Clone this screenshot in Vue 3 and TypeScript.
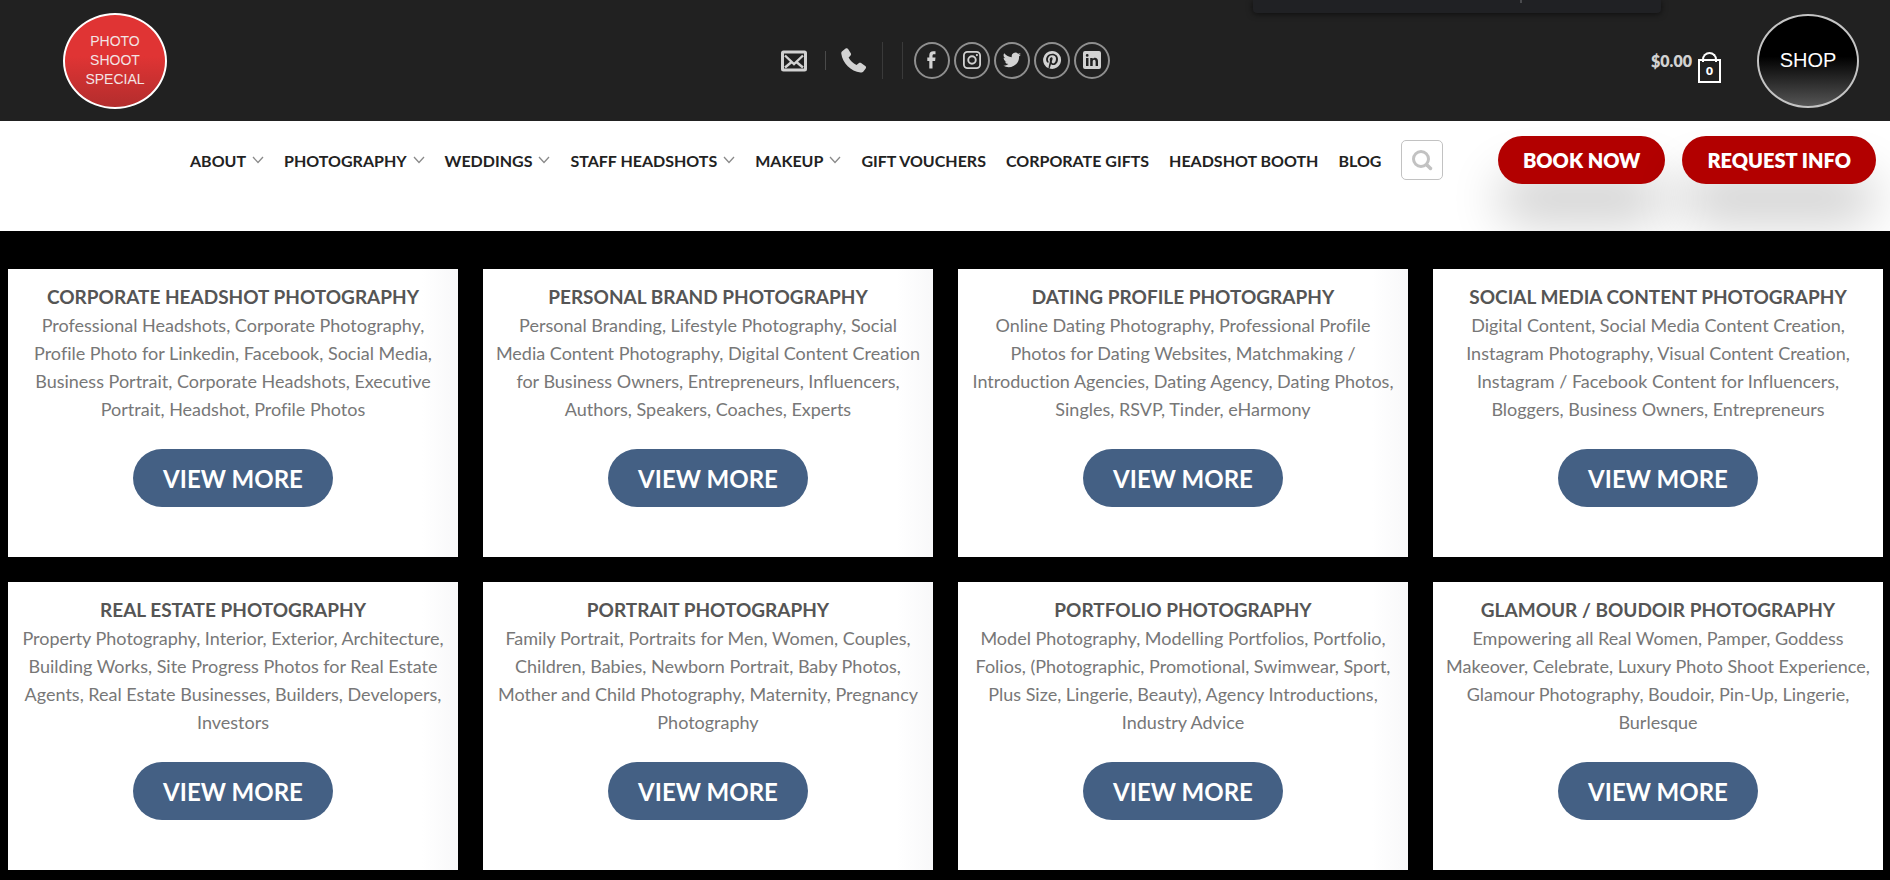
<script setup lang="ts">
interface MenuItem { label: string; menu?: boolean }
interface Social { name: string; path: string }
interface Service { title: string; text: string }

const menu: MenuItem[] = [
  { label: 'ABOUT', menu: true },
  { label: 'PHOTOGRAPHY', menu: true },
  { label: 'WEDDINGS', menu: true },
  { label: 'STAFF HEADSHOTS', menu: true },
  { label: 'MAKEUP', menu: true },
  { label: 'GIFT VOUCHERS' },
  { label: 'CORPORATE GIFTS' },
  { label: 'HEADSHOT BOOTH' },
  { label: 'BLOG' },
]

const socials: Social[] = [
  { name: 'Facebook', path: 'M8.300 19.500v-7.400H6.300v-3.700h2V6.200C8.300 3.500 9.800 2.200 12.200 2.200c1.100 0 2 .1 2.300.15v3h-1.500c-1.200 0-1.500.6-1.500 1.500v1.550h3l-.4 3.700h-2.600v7.400z' },
  { name: 'Instagram', path: 'M6.500 2h9A4.500 4.500 0 0 1 20 6.500v9a4.500 4.500 0 0 1-4.500 4.500h-9A4.500 4.500 0 0 1 2 15.500v-9A4.500 4.500 0 0 1 6.500 2zM6.500 3.800A2.700 2.700 0 0 0 3.800 6.500v9a2.700 2.700 0 0 0 2.700 2.700h9a2.700 2.700 0 0 0 2.700-2.700v-9a2.700 2.700 0 0 0-2.700-2.700zM11 6.300a4.700 4.700 0 1 1 0 9.400a4.700 4.700 0 0 1 0-9.400zM11 8.200a2.800 2.800 0 1 0 0 5.600a2.800 2.800 0 0 0 0-5.600zM15.900 5a1.100 1.100 0 1 1 0 2.200a1.100 1.100 0 0 1 0-2.200z' },
  { name: 'Twitter', path: 'M20 5.400a7.400 7.400 0 0 1-2.100.6a3.700 3.700 0 0 0 1.600-2.100a7.400 7.400 0 0 1-2.400.9a3.700 3.700 0 0 0-6.300 3.400A10.500 10.500 0 0 1 3.200 4.300a3.700 3.700 0 0 0 1.100 4.900a3.700 3.700 0 0 1-1.700-.5a3.700 3.700 0 0 0 3 3.700a3.700 3.700 0 0 1-1.700.1a3.700 3.700 0 0 0 3.500 2.600A7.400 7.400 0 0 1 2 16.600a10.500 10.500 0 0 0 16.100-9.300A7.500 7.500 0 0 0 20 5.400z' },
  { name: 'Pinterest', path: 'M11 2a9 9 0 0 0-3.400 17.300c0-.7 0-1.600.2-2.400l1.200-4.900s-.3-.6-.3-1.400c0-1.300.8-2.300 1.700-2.300c.8 0 1.200.6 1.200 1.300c0 .8-.5 2-.8 3.100c-.2.900.5 1.700 1.400 1.700c1.700 0 2.800-2.100 2.800-4.700c0-1.900-1.300-3.400-3.700-3.400c-2.700 0-4.400 2-4.400 4.300c0 .8.200 1.300.6 1.800c.2.200.2.300.1.500l-.2.700c-.1.200-.2.300-.5.200c-1.200-.5-1.800-1.900-1.800-3.400c0-2.500 2.100-5.600 6.300-5.600c3.400 0 5.600 2.500 5.600 5.100c0 3.500-1.900 6.100-4.800 6.100c-1 0-1.900-.5-2.200-1.100l-.6 2.400c-.2.800-.6 1.600-1 2.300A9 9 0 1 0 11 2z' },
  { name: 'LinkedIn', path: 'M4 2h14a2 2 0 0 1 2 2v14a2 2 0 0 1-2 2H4a2 2 0 0 1-2-2V4a2 2 0 0 1 2-2zM5 9v8h2.500V9zM6.200 5a1.400 1.400 0 1 0 0 2.800a1.400 1.400 0 0 0 0-2.800zM9.200 9v8h2.500v-4.300c0-1.100.4-1.900 1.500-1.900c1 0 1.400.8 1.400 1.900V17H17v-4.700c0-2.300-1.200-3.500-2.900-3.500c-1.200 0-2 .6-2.400 1.300V9z' },
]

const services: Service[] = [
  { title: 'CORPORATE HEADSHOT PHOTOGRAPHY', text: 'Professional Headshots, Corporate Photography, Profile Photo for Linkedin, Facebook, Social Media, Business Portrait, Corporate Headshots, Executive Portrait, Headshot, Profile Photos' },
  { title: 'PERSONAL BRAND PHOTOGRAPHY', text: 'Personal Branding, Lifestyle Photography, Social Media Content Photography, Digital Content Creation for Business Owners, Entrepreneurs, Influencers, Authors, Speakers, Coaches, Experts' },
  { title: 'DATING PROFILE PHOTOGRAPHY', text: 'Online Dating Photography, Professional Profile Photos for Dating Websites, Matchmaking / Introduction Agencies, Dating Agency, Dating Photos, Singles, RSVP, Tinder, eHarmony' },
  { title: 'SOCIAL MEDIA CONTENT PHOTOGRAPHY', text: 'Digital Content, Social Media Content Creation, Instagram Photography, Visual Content Creation, Instagram / Facebook Content for Influencers, Bloggers, Business Owners, Entrepreneurs' },
  { title: 'REAL ESTATE PHOTOGRAPHY', text: 'Property Photography, Interior, Exterior, Architecture, Building Works, Site Progress Photos for Real Estate Agents, Real Estate Businesses, Builders, Developers, Investors' },
  { title: 'PORTRAIT PHOTOGRAPHY', text: 'Family Portrait, Portraits for Men, Women, Couples, Children, Babies, Newborn Portrait, Baby Photos, Mother and Child Photography, Maternity, Pregnancy Photography' },
  { title: 'PORTFOLIO PHOTOGRAPHY', text: 'Model Photography, Modelling Portfolios, Portfolio, Folios, (Photographic, Promotional, Swimwear, Sport, Plus Size, Lingerie, Beauty), Agency Introductions, Industry Advice' },
  { title: 'GLAMOUR / BOUDOIR PHOTOGRAPHY', text: 'Empowering all Real Women, Pamper, Goddess Makeover, Celebrate, Luxury Photo Shoot Experience, Glamour Photography, Boudoir, Pin-Up, Lingerie, Burlesque' },
]
</script>

<template>
  <div class="page">
    <header>
      <div class="topbar">
        <div class="status-panel"><span></span></div>
        <div class="side">
          <a href="#" class="badge special">PHOTO<br>SHOOT<br>SPECIAL</a>
        </div>
        <div class="contact">
          <a href="#" class="mail" aria-label="Email">
            <svg width="26" height="22" viewBox="0 0 26 22">
              <rect x="1.500" y="2" width="23" height="18" rx="1" fill="none" stroke="#d2d2d2" stroke-width="3" />
              <path d="M4 5.500l9 8.500l9-8.500M4 17.500l6-5M22 17.500l-6-5" fill="none" stroke="#d2d2d2" stroke-width="2.400" />
            </svg>
          </a>
          <span class="rule short"></span>
          <a href="#" class="phone" aria-label="Phone">
            <svg width="26" height="26" viewBox="0 0 26 26">
              <path d="M1.200 3.200L4.600.6c.9-.6 1.900-.5 2.500.4l2.700 4.300c.5.900.3 1.700-.4 2.400L7.600 9.500c1.600 3.200 4.400 5.800 7.900 7.400l2.200-1.700c.8-.6 1.600-.6 2.400-.1l4.200 2.900c.9.700 1 1.600.4 2.500l-2.300 3c-.7.900-1.700 1.200-2.900 1.100C9.800 23.500 1.600 15.200.3 5.800c-.1-1.100.1-2 .9-2.600z" fill="#d2d2d2" />
            </svg>
          </a>
          <span class="rule"></span>
          <span class="rule"></span>
          <nav class="socials" aria-label="Social">
            <a v-for="s in socials" :key="s.name" href="#" :aria-label="s.name">
              <svg width="20" height="20" viewBox="1 2 20 20"><path :d="s.path" fill="#d2d2d2" fill-rule="evenodd" /></svg>
            </a>
          </nav>
        </div>
        <div class="side end">
          <a href="#" class="cart">
            <span>$0.00</span>
            <span class="bag">0</span>
          </a>
          <a href="#" class="badge shop">SHOP</a>
        </div>
      </div>

      <div class="navbar">
        <nav class="menu" aria-label="Main">
          <a v-for="m in menu" :key="m.label" href="#">
            {{ m.label }}
            <svg v-if="m.menu" width="12" height="8" viewBox="0 0 12 8"><path d="M1 1l5 5.500L11 1" fill="none" stroke="#8a8a8a" stroke-width="1.300" /></svg>
          </a>
          <button type="button" class="search" aria-label="Search">
            <svg width="22" height="22" viewBox="0 0 22 22">
              <circle cx="10" cy="10" r="7.500" fill="none" stroke="#c2c2c2" stroke-width="3" />
              <path d="M16 16l3.500 3.500" stroke="#c2c2c2" stroke-width="3.500" stroke-linecap="round" />
            </svg>
          </button>
        </nav>
        <div class="actions">
          <button type="button">BOOK NOW</button>
          <button type="button">REQUEST INFO</button>
        </div>
      </div>
    </header>

    <main class="grid">
      <section v-for="s in services" :key="s.title" class="card">
        <h2>{{ s.title }}</h2>
        <p>{{ s.text }}</p>
        <button type="button">VIEW MORE</button>
      </section>
    </main>
  </div>
</template>

<style>
body { margin: 0; background: #000; }
</style>

<style scoped>
.page { font-family: Lato, "Liberation Sans", sans-serif; font-variant-ligatures: none; background: #000; padding-bottom: 9px; }
a { color: inherit; text-decoration: none; }
button { font-family: inherit; cursor: pointer; border: 0; }
svg { display: block; }

.topbar {
  position: relative; display: flex; align-items: center; box-sizing: border-box;
  height: 121px; padding: 0 31px; background: #212121; color: #d2d2d2;
}
.status-panel {
  position: absolute; top: 0; right: 229px; width: 408px; height: 13px;
  background: #202124; border-radius: 0 0 4px 4px; box-shadow: 0 1px 6px rgba(0, 0, 0, .6);
}
.status-panel span { position: absolute; left: 267px; top: 0; width: 2px; height: 3px; background: #4a4b4e; }
.side { flex: 1; display: flex; align-items: center; }
.end { justify-content: flex-end; gap: 36px; }
.badge {
  display: flex; align-items: center; justify-content: center; box-sizing: border-box;
  border-radius: 50%; text-align: center; font-family: "Liberation Sans", Arial, sans-serif; color: #fff;
}
.special {
  width: 104px; height: 96px; margin-left: 32px; border: 2px solid #fff;
  font-size: 14px; line-height: 19px; color: #f3e4e4;
  background: linear-gradient(#e03434 45%, #b32d2d);
}
.shop {
  width: 102px; height: 94px; border: 2px solid #c4c4c4; font-size: 20px;
  background: linear-gradient(#000 45%, #555);
}
.contact { display: flex; align-items: center; }
.mail { margin-right: 18px; }
.phone { margin: 0 15px; }
.rule { width: 1px; height: 37px; background: #3a3a3a; }
.rule + .rule { margin-left: 19px; }
.rule.short { height: 19px; background: #4a4a4a; }
.socials { display: flex; gap: 4px; margin-left: 11px; }
.socials a {
  display: flex; align-items: center; justify-content: center; box-sizing: border-box;
  width: 36px; height: 37px; border: 2px solid #8f8f8f; border-radius: 50%;
}
.cart { display: flex; align-items: center; gap: 6px; font-size: 16px; font-weight: 800; }
.bag {
  position: relative; box-sizing: border-box; width: 23px; height: 24px; margin-top: 21px;
  border: 2px solid #fff; color: #fff; font-size: 12px; line-height: 20px; text-align: center;
}
.bag::before {
  content: ""; position: absolute; left: 2px; top: -9px; width: 11px; height: 8px;
  border: 2px solid #fff; border-bottom: 0; border-radius: 8px 8px 0 0;
}

.navbar {
  display: flex; justify-content: space-between; box-sizing: border-box; overflow: hidden;
  height: 110px; padding: 15px 14px 0 190px; background: #fff;
}
.menu { display: flex; align-items: center; gap: 20px; height: 48px; color: #222; font-size: 16px; font-weight: 700; white-space: nowrap; }
.menu a { display: flex; align-items: center; gap: 6px; }
.search {
  display: flex; align-items: center; justify-content: center; width: 42px; height: 40px; padding: 0;
  border: 1px solid #c2c2c2; border-radius: 5px; background: #fff;
}
.actions { display: flex; gap: 17px; }
.actions button {
  height: 48px; padding: 0 25px; border-radius: 24px; background: #b20000; color: #fff;
  font-size: 20px; font-weight: 800; white-space: nowrap; box-shadow: 0 38px 50px rgba(0, 0, 0, .2);
}

.grid { display: grid; grid-template-columns: repeat(4, 1fr); gap: 25px; padding: 38px 7px 0 8px; }
.card {
  display: flex; flex-direction: column; align-items: center; box-sizing: border-box;
  min-height: 288px; padding: 14px 10px 50px; text-align: center;
  background: linear-gradient(90deg, #fff 92%, #f8f8f9);
}
.card:nth-child(4n) { background: #fff; }
h2 { margin: 0; color: #555; font-size: 19px; line-height: 28px; font-weight: 700; white-space: nowrap; }
p { margin: 0; color: #777; font-size: 18px; line-height: 28px; }
.card button {
  height: 58px; margin-top: 26px; padding: 0 30px; border-radius: 29px;
  background: #446084; color: #fff; font-size: 24px; font-weight: 700;
}
</style>
